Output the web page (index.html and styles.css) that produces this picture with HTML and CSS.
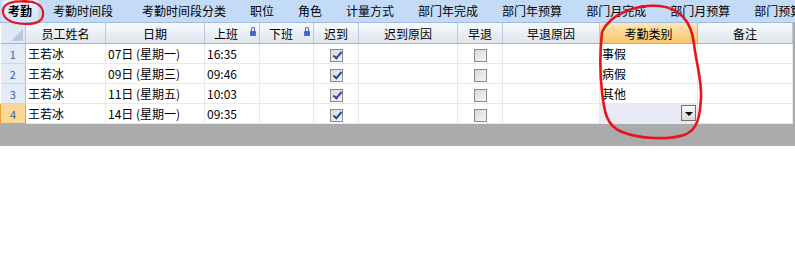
FILE: index.html
```html
<!DOCTYPE html>
<html>
<head>
    <meta charset="utf-8">
    <link rel="stylesheet" href="styles.css">
</head>
<body>
    <div class="tabs">
        <div class="tab active">考勤</div>
        <div class="tab">考勤时间段</div>
        <div class="tab">考勤时间段分类</div>
        <div class="tab">职位</div>
        <div class="tab">角色</div>
        <div class="tab">计量方式</div>
        <div class="tab">部门年完成</div>
        <div class="tab">部门年预算</div>
        <div class="tab">部门月完成</div>
        <div class="tab">部门月预算</div>
        <div class="tab">部门预算</div>
    </div>

    <div class="panel">
        <table class="grid">
            <colgroup>
                <col style="width:25px">
                <col style="width:80px">
                <col style="width:99px">
                <col style="width:55px">
                <col style="width:54px">
                <col style="width:45px">
                <col style="width:99px">
                <col style="width:45px">
                <col style="width:97px">
                <col style="width:98px">
                <col style="width:95px">
            </colgroup>
            <thead>
                <tr>
                    <th class="corner"><span class="tri"></span></th>
                    <th>员工姓名</th>
                    <th>日期</th>
                    <th class="locked">上班<span class="lock"></span></th>
                    <th class="locked">下班<span class="lock"></span></th>
                    <th>迟到</th>
                    <th>迟到原因</th>
                    <th>早退</th>
                    <th>早退原因</th>
                    <th class="sel">考勤类别</th>
                    <th>备注</th>
                </tr>
            </thead>
            <tbody>
                <tr>
                    <td class="num">1</td>
                    <td>王若冰</td>
                    <td>07日 (星期一)</td>
                    <td>16:35</td>
                    <td></td>
                    <td class="c"><span class="chk on"></span></td>
                    <td></td>
                    <td class="c"><span class="chk"></span></td>
                    <td></td>
                    <td>事假</td>
                    <td></td>
                </tr>
                <tr>
                    <td class="num">2</td>
                    <td>王若冰</td>
                    <td>09日 (星期三)</td>
                    <td>09:46</td>
                    <td></td>
                    <td class="c"><span class="chk on"></span></td>
                    <td></td>
                    <td class="c"><span class="chk"></span></td>
                    <td></td>
                    <td>病假</td>
                    <td></td>
                </tr>
                <tr>
                    <td class="num">3</td>
                    <td>王若冰</td>
                    <td>11日 (星期五)</td>
                    <td>10:03</td>
                    <td></td>
                    <td class="c"><span class="chk on"></span></td>
                    <td></td>
                    <td class="c"><span class="chk"></span></td>
                    <td></td>
                    <td>其他</td>
                    <td></td>
                </tr>
                <tr>
                    <td class="num cur">4</td>
                    <td>王若冰</td>
                    <td>14日 (星期一)</td>
                    <td>09:35</td>
                    <td></td>
                    <td class="c"><span class="chk on"></span></td>
                    <td></td>
                    <td class="c"><span class="chk"></span></td>
                    <td></td>
                    <td class="edit"><span class="drop"></span></td>
                    <td></td>
                </tr>
            </tbody>
        </table>
    </div>

    <svg class="marks" width="795" height="271" viewBox="0 0 795 271">
        <path d="M30 2 C14 0 4 3 3 10 C2 19 12 24 26 24 C38 24 44 20 43 12 C42 5 36 1 22 1" fill="none" stroke="#e8141c" stroke-width="2.2"/>
        <path d="M602 32 C610 14 636 4 660 6 C684 9 692 26 694 44 C696 62 702 80 701 98 C700 116 698 130 684 135 C668 140 640 139 622 132 C606 126 604 110 602 92 C600 74 600 50 602 32" fill="none" stroke="#e8141c" stroke-width="2.6"/>
    </svg>
</body>
</html>
```

FILE: styles.css
```css
body {
    margin: 0;
    width: 795px;
    height: 271px;
    background: #ffffff;
    font-family: "Noto Sans CJK SC", "DejaVu Sans", sans-serif;
    font-size: 12px;
    color: #000;
    position: relative;
    overflow: hidden;
}

.tabs {
    display: flex;
    height: 23px;
    background: #c4dbf8;
    border-bottom: 1px solid #9fbbe0;
    box-sizing: border-box;
    padding-left: 2px;
    white-space: nowrap;
    overflow: hidden;
}

.tab {
    padding: 0 12px;
    line-height: 22px;
    flex: none;
}

.tab:nth-child(2) { padding-left: 15px; }
.tab:nth-child(3) { padding-left: 17px; }

.tab.active {
    font-weight: bold;
    padding: 0 6px;
    background: linear-gradient(#e9f2fd, #d2e4fa);
    border-radius: 3px 3px 0 0;
}

.panel {
    background: #ababab;
    height: 123px;
}

.grid {
    border-collapse: collapse;
    table-layout: fixed;
    width: 792px;
    background: #fff;
    border-right: 1px solid #6e6e6e;
    border-bottom: 1px solid #6e6e6e;
}

.grid th {
    height: 20px;
    padding: 0;
    font-weight: normal;
    background: linear-gradient(#f7f9fc, #dfe5ee);
    border-right: 1px solid #b9c9dd;
    border-bottom: 1px solid #9db6d6;
    text-align: center;
    white-space: nowrap;
    position: relative;
}

.grid th.sel {
    background: linear-gradient(#fde8b4, #f7c66d);
    border-right-color: #e0b065;
}

.grid th.corner {
    background: #dfe8f5;
}

.tri {
    position: absolute;
    right: 2px;
    bottom: 2px;
    width: 0;
    height: 0;
    border-left: 12px solid transparent;
    border-bottom: 12px solid #b9c9dc;
}

.grid th.locked {
    padding-left: 9px;
    text-align: left;
}

.lock {
    position: absolute;
    right: 3px;
    top: 8px;
    width: 6px;
    height: 5px;
    background: #3f6bc6;
    border-radius: 1px;
}

.lock::before {
    content: "";
    position: absolute;
    left: 1px;
    top: -4px;
    width: 2px;
    height: 3px;
    border: 1px solid #3f6bc6;
    border-bottom: none;
    border-radius: 2px 2px 0 0;
}

.grid td {
    height: 19px;
    padding: 0 0 0 2px;
    border-right: 1px solid #e9e9e9;
    border-bottom: 1px solid #e9e9e9;
    white-space: nowrap;
    overflow: hidden;
}

.grid td.num {
    padding: 0;
    text-align: center;
    color: #3a64a6;
    background: #e3ebf6;
    border-right: 1px solid #a8bfdc;
    border-bottom: 1px solid #c9d7ea;
    font-size: 11px;
}

.grid td.num.cur {
    background: #fdd798;
    border: 1px solid #f0a030;
}

.grid td.c {
    padding: 0;
    text-align: center;
}

.chk {
    display: inline-block;
    vertical-align: middle;
    width: 11px;
    height: 11px;
    border: 1px solid #8a8a8a;
    background: linear-gradient(135deg, #d9d9d9, #f6f6f6);
    position: relative;
}

.chk.on::after {
    content: "";
    position: absolute;
    left: 4px;
    top: 0;
    width: 3px;
    height: 7px;
    border-right: 2px solid #2c46a0;
    border-bottom: 2px solid #2c46a0;
    transform: rotate(40deg);
}

.grid td.edit {
    background: #e8ebf5;
    position: relative;
}

.drop {
    position: absolute;
    right: 1px;
    top: 1px;
    width: 15px;
    height: 16px;
    border: 1px solid #707070;
    background: linear-gradient(#fbfbfb, #d8d8d8);
    box-sizing: border-box;
}

.drop::after {
    content: "";
    position: absolute;
    left: 3px;
    top: 6px;
    border-left: 4px solid transparent;
    border-right: 4px solid transparent;
    border-top: 4px solid #000;
}

.marks {
    position: absolute;
    left: 0;
    top: 0;
    pointer-events: none;
}
```
